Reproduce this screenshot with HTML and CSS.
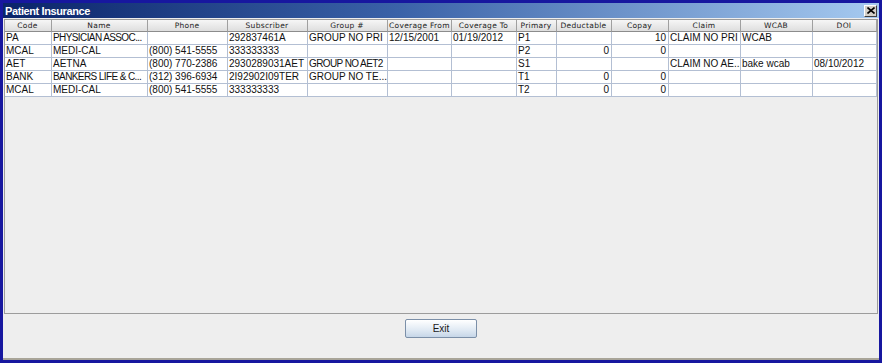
FILE: index.html
```html
<!DOCTYPE html>
<html lang="en">
<head>
    <meta charset="UTF-8">
    <title>Patient Insurance</title>
    <link rel="stylesheet" href="styles.css">
</head>
<body>
    <div class="window">
        <div class="titlebar">
            <span class="title">Patient Insurance</span>
            <span class="close">
                <svg width="8" height="7" viewBox="0 0 8 7"><path d="M0.5 0.5 L7.5 6.5 M7.5 0.5 L0.5 6.5" stroke="#000" stroke-width="1.6"/></svg>
            </span>
        </div>
        <div class="content">
            <div class="scroll">
                <div class="row head">
                    <div class="cell">Code</div>
                    <div class="cell">Name</div>
                    <div class="cell">Phone</div>
                    <div class="cell">Subscriber</div>
                    <div class="cell">Group #</div>
                    <div class="cell">Coverage From</div>
                    <div class="cell">Coverage To</div>
                    <div class="cell">Primary</div>
                    <div class="cell">Deductable</div>
                    <div class="cell">Copay</div>
                    <div class="cell">Claim</div>
                    <div class="cell">WCAB</div>
                    <div class="cell">DOI</div>
                </div>
                <div class="row">
                    <div class="cell">PA</div>
                    <div class="cell trim">PHYSICIAN ASSOC...</div>
                    <div class="cell"></div>
                    <div class="cell">292837461A</div>
                    <div class="cell">GROUP NO PRI</div>
                    <div class="cell">12/15/2001</div>
                    <div class="cell">01/19/2012</div>
                    <div class="cell">P1</div>
                    <div class="cell num"></div>
                    <div class="cell num">10</div>
                    <div class="cell">CLAIM NO PRI</div>
                    <div class="cell">WCAB</div>
                    <div class="cell"></div>
                </div>
                <div class="row">
                    <div class="cell">MCAL</div>
                    <div class="cell">MEDI-CAL</div>
                    <div class="cell">(800) 541-5555</div>
                    <div class="cell">333333333</div>
                    <div class="cell"></div>
                    <div class="cell"></div>
                    <div class="cell"></div>
                    <div class="cell">P2</div>
                    <div class="cell num">0</div>
                    <div class="cell num">0</div>
                    <div class="cell"></div>
                    <div class="cell"></div>
                    <div class="cell"></div>
                </div>
                <div class="row">
                    <div class="cell">AET</div>
                    <div class="cell">AETNA</div>
                    <div class="cell">(800) 770-2386</div>
                    <div class="cell">2930289031AET</div>
                    <div class="cell trim">GROUP NO AET2</div>
                    <div class="cell"></div>
                    <div class="cell"></div>
                    <div class="cell">S1</div>
                    <div class="cell num"></div>
                    <div class="cell num"></div>
                    <div class="cell">CLAIM NO AE...</div>
                    <div class="cell">bake wcab</div>
                    <div class="cell">08/10/2012</div>
                </div>
                <div class="row">
                    <div class="cell">BANK</div>
                    <div class="cell trim">BANKERS LIFE &amp; C...</div>
                    <div class="cell">(312) 396-6934</div>
                    <div class="cell">2I92902I09TER</div>
                    <div class="cell">GROUP NO TE...</div>
                    <div class="cell"></div>
                    <div class="cell"></div>
                    <div class="cell">T1</div>
                    <div class="cell num">0</div>
                    <div class="cell num">0</div>
                    <div class="cell"></div>
                    <div class="cell"></div>
                    <div class="cell"></div>
                </div>
                <div class="row">
                    <div class="cell">MCAL</div>
                    <div class="cell">MEDI-CAL</div>
                    <div class="cell">(800) 541-5555</div>
                    <div class="cell">333333333</div>
                    <div class="cell"></div>
                    <div class="cell"></div>
                    <div class="cell"></div>
                    <div class="cell">T2</div>
                    <div class="cell num">0</div>
                    <div class="cell num">0</div>
                    <div class="cell"></div>
                    <div class="cell"></div>
                    <div class="cell"></div>
                </div>
            </div>
            <div class="actions">
                <button class="btn">Exit</button>
            </div>
        </div>
    </div>
</body>
</html>
```

FILE: styles.css
```css
body {
    margin: 0;
    background: #fff;
    font-family: "Liberation Sans", Arial, sans-serif;
}
.window {
    width: 882px;
    height: 363px;
    box-sizing: border-box;
    border: 3px solid #17179f;
    background: #eeeeee;
    display: flex;
    flex-direction: column;
}
.titlebar {
    height: 15px;
    flex: none;
    display: flex;
    align-items: center;
    justify-content: space-between;
    padding: 0 2px;
    background: linear-gradient(to right, #0a246a, #3a62a8 45%, #a6caf0);
}
.title {
    color: #fff;
    font-weight: bold;
    font-size: 11px;
    letter-spacing: -0.4px;
}
.close {
    width: 13px;
    height: 12px;
    box-sizing: border-box;
    display: flex;
    align-items: center;
    justify-content: center;
    background: #d4d0c8;
    border: 1px solid;
    border-color: #fff #404040 #404040 #fff;
}
.content {
    flex: 1;
    display: flex;
    flex-direction: column;
    padding: 1px 1px 0;
    box-shadow: inset 0 -2px 0 #a8a498;
}
.scroll {
    height: 295px;
    box-sizing: border-box;
    border: 1px solid #9c9c9c;
    background: #eeeeee;
    overflow: hidden;
}
.row {
    display: grid;
    grid-template-columns: 47px 96px 80px 80px 80px 64px 65px 40px 55px 57px 72px 72px 64px;
    height: 13px;
    background: #fff;
}
.cell {
    box-sizing: border-box;
    border-right: 1px solid #b3bfd3;
    border-bottom: 1px solid #b3bfd3;
    padding: 0 2px 0 1px;
    font-size: 10px;
    line-height: 12px;
    color: #111;
    white-space: nowrap;
    overflow: hidden;
}
.cell.num {
    text-align: right;
}
.cell.trim {
    letter-spacing: -0.6px;
}
.head {
    height: 12px;
}
.head .cell {
    background: linear-gradient(#f6f6f6, #dedede);
    border-right-color: #a0a0a0;
    border-bottom-color: #8c8c8c;
    font-family: "DejaVu Sans", sans-serif;
    font-size: 7.5px;
    letter-spacing: 0.3px;
    line-height: 11px;
    text-align: center;
    color: #222;
}
.actions {
    display: flex;
    justify-content: center;
    padding-top: 5px;
}
.btn {
    width: 72px;
    height: 19px;
    padding: 0;
    font-family: "Liberation Sans", Arial, sans-serif;
    font-size: 10px;
    color: #1a1a1a;
    border: 1px solid #7b8fa8;
    border-radius: 2px;
    background: linear-gradient(#ffffff, #e2ebf4 55%, #c6d6e8);
}
```
